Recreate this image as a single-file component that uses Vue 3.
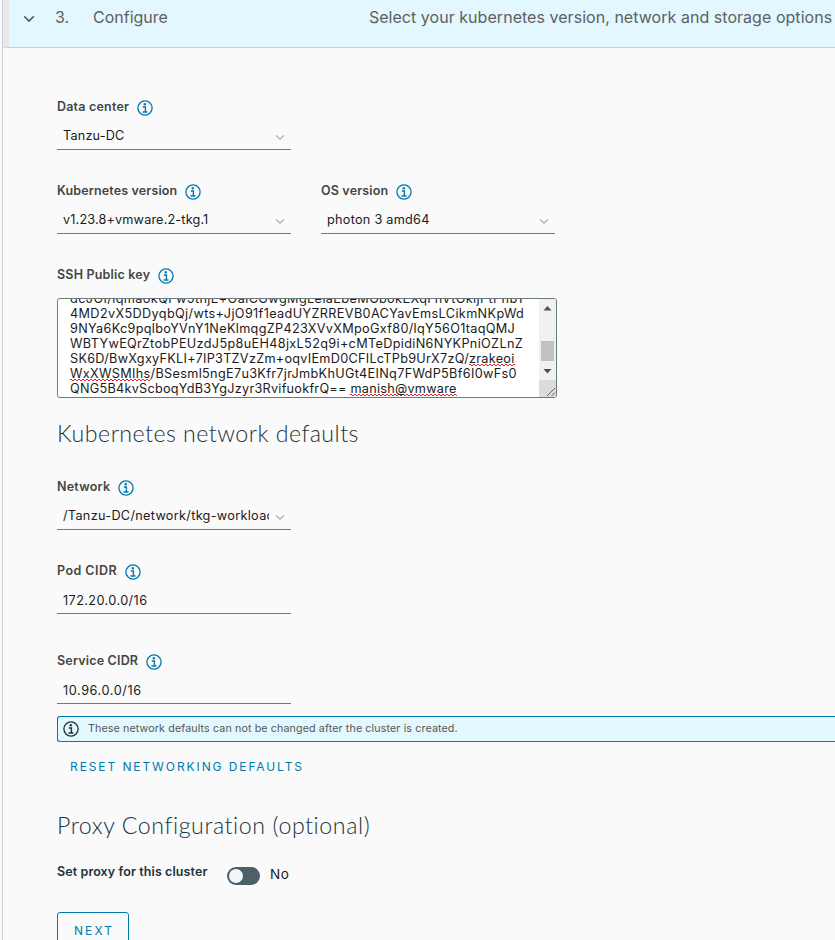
<script setup>
import { ref, h } from 'vue'

const InfoIcon = () =>
  h('svg', { class: 'info-icon', viewBox: '0 0 16 16', fill: 'none', stroke: 'currentColor', 'aria-hidden': 'true' }, [
    h('circle', { cx: 8, cy: 8, r: 7.1, 'stroke-width': 1.3 }),
    h('circle', { cx: 7.8, cy: 4.3, r: 1.2, fill: 'currentColor', stroke: 'none' }),
    h('path', { d: 'M5.8 7h2.6v4.8M5.5 12h5', 'stroke-width': 1.4 }),
  ])

const Chevron = () =>
  h('svg', { class: 'chevron', viewBox: '0 0 12 8', fill: 'none', stroke: 'currentColor', 'aria-hidden': 'true' }, [
    h('path', { d: 'M1.2 1.2 6 6l4.8-4.8', 'stroke-width': 1.6 }),
  ])

const proxy = ref(false)

const keyLines = [
  { id: 'k1', text: 'dcJOI/lqmaokQFw5thjE+OaiCOwgMgLeiaEbeMGbokEXqFnVtOkljPtPhbY' },
  { id: 'k2', text: '4MD2vX5DDyqbQj/wts+JjO91f1eadUYZRREVB0ACYavEmsLCikmNKpWd' },
  { id: 'k3', text: '9NYa6Kc9pqlboYVnY1NeKlmqgZP423XVvXMpoGxf80/lqY56O1taqQMJ' },
  { id: 'k4', text: 'WBTYwEQrZtobPEUzdJ5p8uEH48jxL52q9i+cMTeDpidiN6NYKPniOZLnZ' },
  { id: 'k5', text: 'SK6D/BwXgxyFKLI+7IP3TZVzZm+oqvIEmD0CFILcTPb9UrX7zQ/', after: 'zrakeoi' },
  { id: 'k6', before: 'WxXWSMIhs', text: '/BSesml5ngE7u3Kfr7jrJmbKhUGt4EINq7FWdP5Bf6I0wFs0' },
  { id: 'k7', text: 'QNG5B4kvScboqYdB3YgJzyr3RvifuokfrQ== ', after: 'manish@vmware' },
]
</script>

<template>
  <main class="page">
    <section class="step">
      <header class="step-header">
        <Chevron />
        <span class="step-number">3.</span>
        <span class="step-title">Configure</span>
        <span class="step-description">Select your kubernetes version, network and storage options</span>
      </header>

      <div class="step-body">
        <div class="field">
          <label class="label dc">Data center <InfoIcon /></label>
          <div class="control"><span class="value tanzu">Tanzu-DC</span><Chevron /></div>
        </div>

        <div class="row">
          <div class="field">
            <label class="label kv">Kubernetes version <InfoIcon /></label>
            <div class="control"><span class="value ver">v1.23.8+vmware.2-tkg.1</span><Chevron /></div>
          </div>
          <div class="field">
            <label class="label osv">OS version <InfoIcon /></label>
            <div class="control"><span class="value photon">photon 3 amd64</span><Chevron /></div>
          </div>
        </div>

        <div class="key-field">
          <label class="label ssh">SSH Public key <InfoIcon /></label>
          <div class="textarea">
            <div class="key-text">
              <div v-for="line in keyLines" :key="line.id" class="key-line" :class="line.id"><span v-if="line.before" class="misspelt">{{ line.before }}</span>{{ line.text }}<span v-if="line.after" class="misspelt">{{ line.after }}</span></div>
            </div>
            <div class="scroll">
              <svg class="scrollbar" viewBox="0 0 17 81" aria-hidden="true">
                <path fill="#505050" d="M4.500 11.500h8L8.500 7zM4.500 70h8l-4 4.500z" />
                <path fill="#c1c1c1" d="M2 42h13v20H2z" />
              </svg>
              <svg class="grip" viewBox="0 0 17 17" aria-hidden="true">
                <path d="M8 16l8-8M12.500 16l3.500-3.500" fill="none" stroke="#666" />
              </svg>
            </div>
          </div>
        </div>

        <h2 class="heading defaults">Kubernetes network defaults</h2>

        <div class="field">
          <label class="label net">Network <InfoIcon /></label>
          <div class="control"><span class="value path">/Tanzu-DC/network/tkg-workload</span><Chevron /></div>
        </div>
        <div class="field pod">
          <label class="label podl">Pod CIDR <InfoIcon /></label>
          <div class="control input"><span class="value ip1">172.20.0.0/16</span></div>
        </div>
        <div class="field service">
          <label class="label svc">Service CIDR <InfoIcon /></label>
          <div class="control input"><span class="value ip2">10.96.0.0/16</span></div>
        </div>

        <div class="alert">
          <InfoIcon />
          <span>These network defaults can not be changed after the cluster is created.</span>
        </div>
        <button type="button" class="reset">RESET NETWORKING DEFAULTS</button>

        <h2 class="heading proxy">Proxy Configuration (optional)</h2>
        <div class="proxy-row">
          <span class="label setp">Set proxy for this cluster</span>
          <button type="button" class="toggle" :class="{ on: proxy }" @click="proxy = !proxy"><i></i></button>
          <span class="toggle-text">{{ proxy ? 'Yes' : 'No' }}</span>
        </div>
        <button type="button" class="next">NEXT</button>
      </div>
    </section>
  </main>
</template>

<style>
body {
  background: #fafafa;
  overflow: hidden;
}
</style>

<style scoped>
.page {
  box-sizing: border-box;
  height: 940px;
  padding-left: 2px;
  overflow: hidden;
  background: #fafafa;
  color: #313131;
  font-family: Inter, 'Liberation Sans', sans-serif;
}
.step {
  height: 100%;
  border-left: 1px solid #c8d2dc;
}
.step-header {
  box-sizing: border-box;
  display: flex;
  align-items: center;
  height: 48px;
  padding: 0 0 13px 14px;
  border-left: 6px solid #e8e8e8;
  border-bottom: 1px solid #c4d0dd;
  background: #e3f7ff;
  color: #606060;
  font-size: 16px;
  line-height: 20px;
  white-space: nowrap;
}
.step-header .chevron {
  width: 12px;
  height: 8px;
  margin-top: 3px;
  color: #565656;
}
.step-number {
  width: 38px;
  margin-left: 20px;
}
.step-description {
  margin-left: 201px;
  letter-spacing: 0.04px;
}
.step-body {
  padding: 49px 0 0 54px;
}
.field {
  width: 234px;
}
.row {
  display: flex;
  gap: 30px;
  margin-top: 31px;
}
.label {
  display: flex;
  align-items: center;
  height: 20px;
  font-size: 12.5px;
  font-weight: 600;
  line-height: 20px;
  color: #454545;
  white-space: nowrap;
}
.info-icon {
  width: 16px;
  height: 16px;
  flex: none;
}
.label .info-icon {
  margin: 1px 0 0 8px;
  color: #0079ad;
}
.control {
  box-sizing: border-box;
  display: flex;
  align-items: center;
  height: 33px;
  padding: 6px 6px 0;
  border-bottom: 1px solid #6a7a81;
}
.control.input {
  padding-top: 8px;
}
.value {
  flex: none;
  width: 206px;
  overflow: hidden;
  font-size: 12.7px;
  line-height: 18px;
  color: #1b1b1b;
  white-space: nowrap;
}
.control .chevron {
  width: 10px;
  height: 7px;
  margin: 3px 0 0 6px;
  color: #b3b3b3;
}
.key-field {
  margin-top: 31px;
}
.textarea {
  box-sizing: border-box;
  display: flex;
  width: 500px;
  height: 100px;
  margin-top: 13px;
  border: 1px solid #6a7a81;
  border-radius: 3px;
  overflow: hidden;
  background: #fff;
}
.key-text {
  display: flex;
  flex: 1;
  flex-direction: column;
  justify-content: flex-end;
  min-width: 0;
  padding: 0 0 1px 12px;
}
.key-line {
  flex: none;
  height: 15px;
  font-size: 12.7px;
  line-height: 15px;
  color: #1b1b1b;
  white-space: pre;
}
.misspelt {
  background-image:
    repeating-linear-gradient(90deg, #e22 0 2px, transparent 2px 4px),
    repeating-linear-gradient(90deg, transparent 0 2px, #e22 2px 4px);
  background-position: 0 calc(100% - 1px), 0 100%;
  background-size: 100% 1px;
  background-repeat: no-repeat;
}
.scroll {
  display: flex;
  flex-direction: column;
  width: 17px;
  background: #f1f1f1;
}
.scrollbar {
  width: 17px;
  height: 81px;
}
.grip {
  width: 17px;
  height: 17px;
  background: #dcdcdc;
}
.heading {
  margin: 0;
  font-family: Lato, 'Liberation Sans', sans-serif;
  font-size: 23.2px;
  font-weight: 300;
  line-height: 30px;
  color: #21333b;
  white-space: nowrap;
}
.defaults {
  margin: 20px 0 29px;
  letter-spacing: 0.47px;
}
.pod {
  margin-top: 31px;
}
.service {
  margin-top: 37px;
}
.alert {
  box-sizing: border-box;
  display: flex;
  align-items: center;
  gap: 9px;
  height: 26px;
  margin-top: 12px;
  padding-left: 5px;
  border: 1px solid #0079ad;
  border-right: 0;
  border-radius: 3px 0 0 3px;
  background: #e3f7ff;
  color: #565656;
  font-size: 10.7px;
  line-height: 16px;
  letter-spacing: 0.12px;
}
.alert .info-icon {
  color: #21333b;
}
button {
  display: block;
  margin: 0;
  padding: 0;
  border: 0;
  background: none;
  color: #0079ad;
  font-family: inherit;
  font-size: 12px;
  line-height: 20px;
}
.reset {
  margin: 15px 0 0 13px;
  letter-spacing: 1.906px;
}
.proxy {
  margin-top: 33px;
  letter-spacing: 0.57px;
}
.proxy-row {
  display: flex;
  align-items: flex-start;
  height: 24px;
  margin-top: 22px;
}
.toggle {
  box-sizing: border-box;
  width: 33px;
  height: 18px;
  margin: 5px 0 0;
  padding: 2px;
  border-radius: 9px;
  background: #4c6069;
}
.toggle i {
  display: block;
  width: 14px;
  height: 14px;
  border-radius: 50%;
  background: #f0f6fa;
}
.toggle.on i {
  margin-left: 15px;
}
.toggle-text {
  margin: 2px 0 0 10px;
  font-size: 13.5px;
  line-height: 20px;
  letter-spacing: 0.7px;
  color: #1b1b1b;
}
.next {
  box-sizing: border-box;
  width: 72px;
  height: 36px;
  margin-top: 26px;
  padding: 1px 0 0 2px;
  border: 1px solid #0079ad;
  border-radius: 3px;
  line-height: 34px;
  letter-spacing: 2.1px;
}
.dc { letter-spacing: 0.203px; }
.kv { letter-spacing: 0.14px; }
.osv { letter-spacing: 0.16px; }
.ssh { letter-spacing: 0.187px; }
.net { letter-spacing: 0.215px; }
.podl { letter-spacing: 0.45px; }
.svc { letter-spacing: 0.185px; }
.setp { width: 170px; letter-spacing: 0.1px; color: #21333b; }
.tanzu { letter-spacing: 0.17px; }
.ver { letter-spacing: 0.15px; }
.photon { letter-spacing: 0.26px; }
.path { letter-spacing: 0.3px; }
.ip1 { letter-spacing: 0.408px; }
.ip2 { letter-spacing: 0.576px; }
.k1 { letter-spacing: 0.38px; }
.k2 { letter-spacing: 0.355px; }
.k3 { letter-spacing: 0.305px; }
.k4 { letter-spacing: 0.325px; }
.k5 { letter-spacing: 0.265px; }
.k6 { letter-spacing: 0.31px; }
.k7 { letter-spacing: 0.25px; }
</style>
